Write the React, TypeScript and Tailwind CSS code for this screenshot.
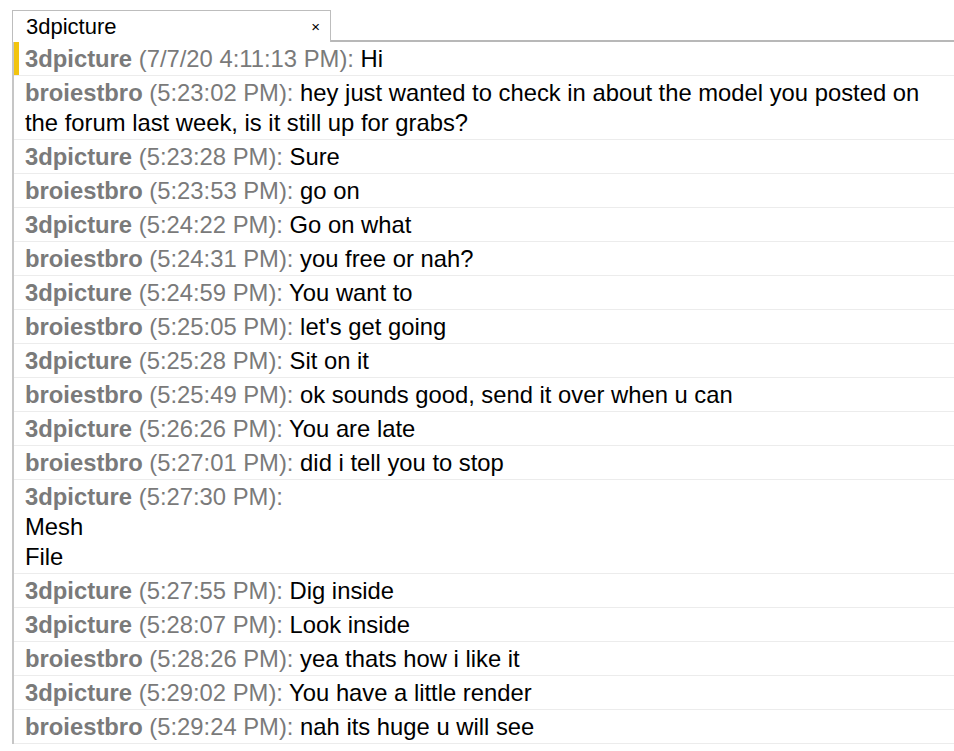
type Msg = { from: string; time: string; lines: string[]; text?: string };

const messages: Msg[] = [
  { from: "3dpicture", time: "7/7/20 4:11:13 PM", lines: [], text: "Hi" },
  {
    from: "broiestbro",
    time: "5:23:02 PM",
    lines: [],
    text: "hey just wanted to check in about the model you posted on the forum last week, is it still up for grabs?",
  },
  { from: "3dpicture", time: "5:23:28 PM", lines: [], text: "Sure" },
  { from: "broiestbro", time: "5:23:53 PM", lines: [], text: "go on" },
  { from: "3dpicture", time: "5:24:22 PM", lines: [], text: "Go on what" },
  { from: "broiestbro", time: "5:24:31 PM", lines: [], text: "you free or nah?" },
  { from: "3dpicture", time: "5:24:59 PM", lines: [], text: "You want to" },
  { from: "broiestbro", time: "5:25:05 PM", lines: [], text: "let's get going" },
  { from: "3dpicture", time: "5:25:28 PM", lines: [], text: "Sit on it" },
  { from: "broiestbro", time: "5:25:49 PM", lines: [], text: "ok sounds good, send it over when u can" },
  { from: "3dpicture", time: "5:26:26 PM", lines: [], text: "You are late" },
  { from: "broiestbro", time: "5:27:01 PM", lines: [], text: "did i tell you to stop" },
  { from: "3dpicture", time: "5:27:30 PM", lines: ["Mesh", "File"] },
  { from: "3dpicture", time: "5:27:55 PM", lines: [], text: "Dig inside" },
  { from: "3dpicture", time: "5:28:07 PM", lines: [], text: "Look inside" },
  { from: "broiestbro", time: "5:28:26 PM", lines: [], text: "yea thats how i like it" },
  { from: "3dpicture", time: "5:29:02 PM", lines: [], text: "You have a little render" },
  { from: "broiestbro", time: "5:29:24 PM", lines: [], text: "nah its huge u will see" },
];

const Row = ({ msg, first }: { msg: Msg; first: boolean }) => {
  return (
    <div className="relative border-b border-[#ececec] pl-[11px] pr-4 pt-[2px] pb-[1px] text-[23.8px] leading-[30px]">
      {first && <div className="absolute left-0 top-0 bottom-0 w-[5px] bg-[#f2c40f]" />}
      <span className="font-bold text-[#7a7a7a]">{msg.from}</span>
      <span className="text-[#7a7a7a]"> ({msg.time}):</span>
      {msg.text && <span className="text-black"> {msg.text}</span>}
      {msg.lines.map((l) => (
        <div key={l} className="text-black">
          {l}
        </div>
      ))}
    </div>
  );
};

export default function App() {
  return (
    <div
      className="w-[954px] h-[751px] bg-white overflow-hidden pt-[10px] pl-[12px]"
      style={{ fontFamily: '"Liberation Sans", Arial, sans-serif' }}
    >
      <div className="flex items-end">
        <div className="w-[319px] h-[32px] border border-b-0 border-[#bdbdbd] bg-white flex items-center justify-between pl-[13px] pr-[10px] text-[22px] text-black">
          <span>3dpicture</span>
          <span className="text-[15px] leading-none">×</span>
        </div>
        <div className="flex-1 h-[2px] bg-[#b8b8b8]" />
      </div>
      <div className="border-l-2 border-[#c6c6c6]">
        {messages.map((m, i) => (
          <Row key={i} msg={m} first={i === 0} />
        ))}
      </div>
    </div>
  );
}
